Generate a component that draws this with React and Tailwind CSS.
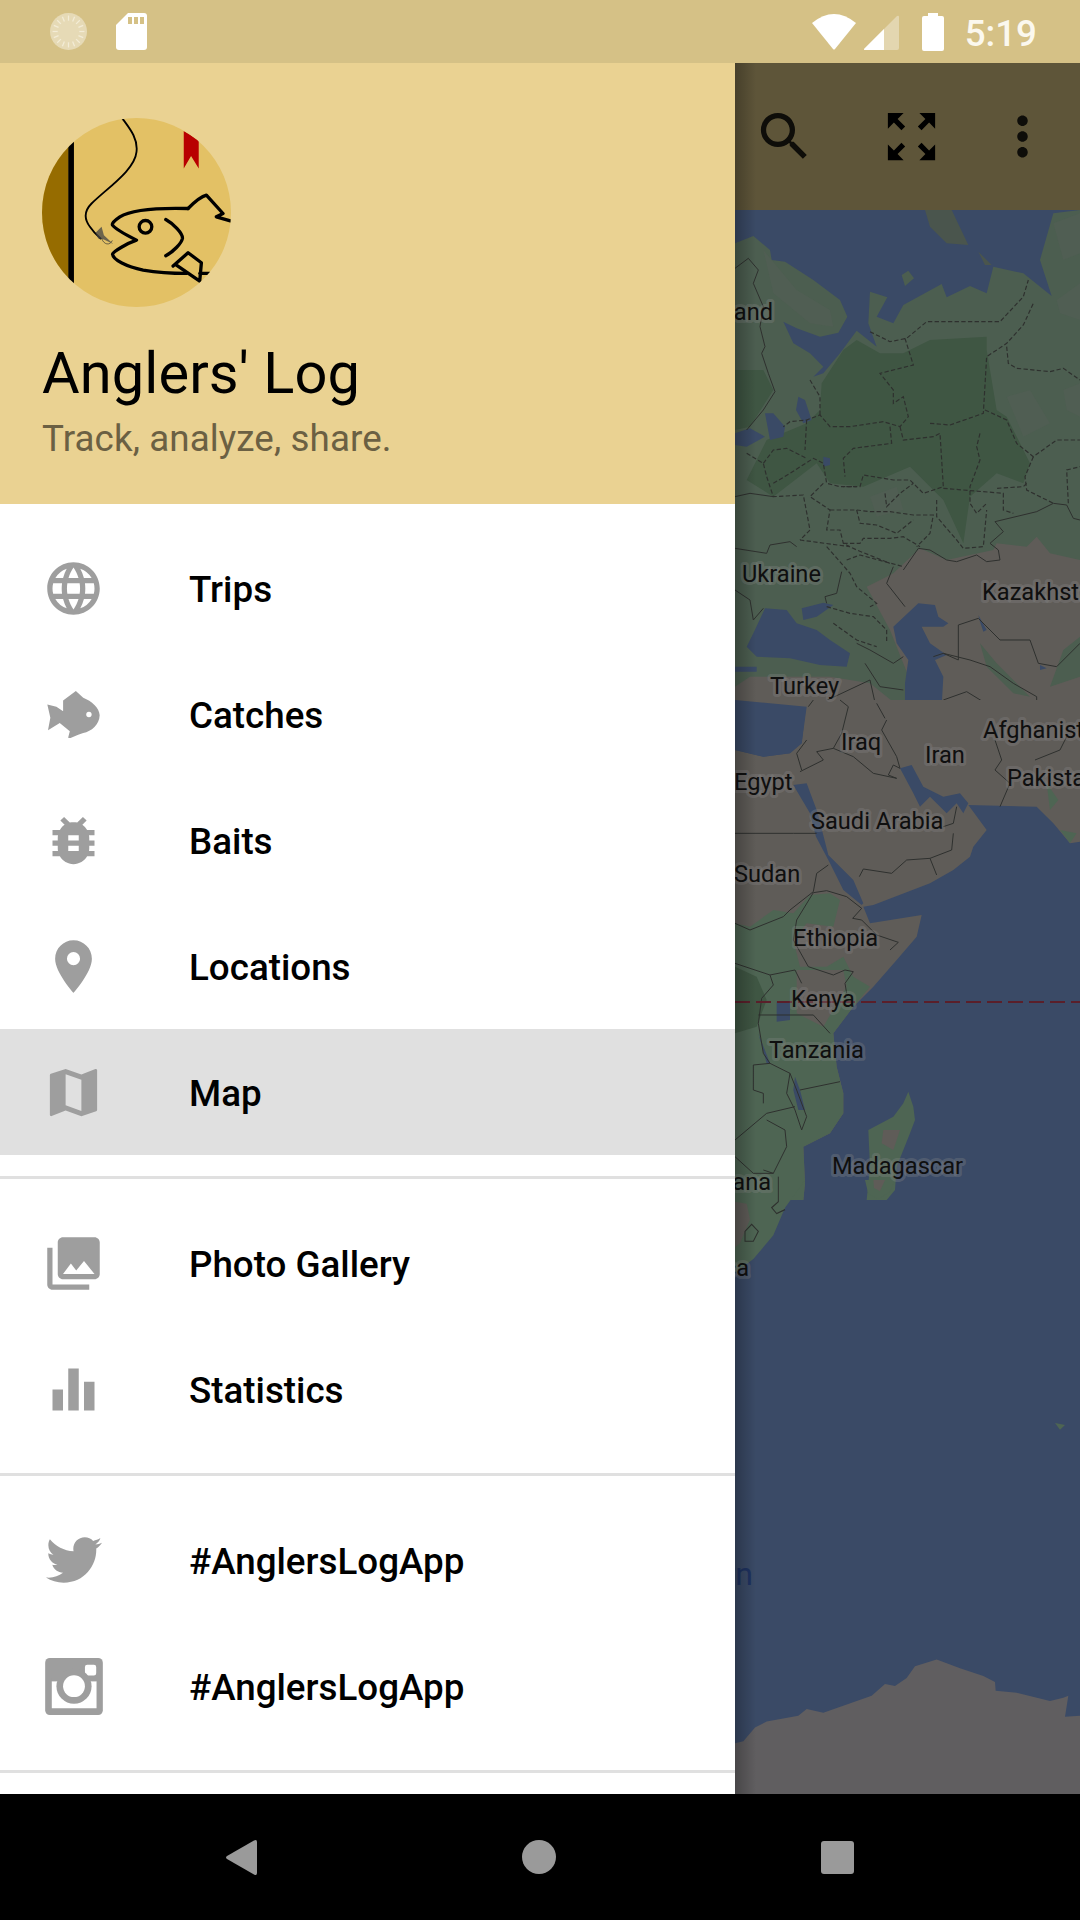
import { MdLanguage, MdBugReport, MdPlace, MdMap, MdPhotoLibrary, MdEqualizer, MdSearch, MdZoomOutMap, MdMoreVert } from "react-icons/md";
import { FaTwitter } from "react-icons/fa";

const FishIcon = () => (
  <svg viewBox="82 450 158 140" className="w-[53px] h-[47px]">
    <path fill="#9e9e9e" d="M83,490 L110,497 L130,510 L130,478 L168,450 L190,470 C215,480 238,500 239,522 C238,550 215,570 190,575 L175,580 L150,591 L145,589 L150,570 L120,545 L85,567 L92,530 Z" />
    <circle cx="207" cy="520" r="8" fill="#fff" />
  </svg>
);

const InstagramIcon = () => (
  <svg viewBox="73 470 174 172" className="w-[58px] h-[57px]">
    <rect x="73" y="470" width="174" height="172" rx="14" fill="#9e9e9e" />
    <path fill="#fff" d="M93,540 H228 V622 H93 Z M193,497 Q193,490 200,490 H220 Q227,490 227,497 V516 Q227,523 220,523 H200 Q193,523 193,516 Z" />
    <circle cx="160" cy="555" r="53" fill="#9e9e9e" />
    <circle cx="160" cy="555" r="33" fill="#fff" />
    <rect x="93" y="530" width="15" height="10" fill="#9e9e9e" />
    <rect x="212" y="530" width="16" height="10" fill="#9e9e9e" />
  </svg>
);

const Logo = () => (
  <svg viewBox="36 23 568 568" className="w-[189px] h-[189px]">
    <defs>
      <clipPath id="logoClip">
        <circle cx="320" cy="307" r="284" />
      </clipPath>
    </defs>
    <g clipPath="url(#logoClip)">
      <rect x="36" y="23" width="568" height="568" fill="#e3c165" />
      <rect x="36" y="23" width="80" height="568" fill="#966c00" />
      <rect x="115" y="23" width="17" height="568" fill="#000" />
      <path fill="#b80000" d="M462,62 L507,90 V175 L484,137 L462,175 Z" />
      <g fill="none" stroke="#000" strokeLinecap="round" strokeLinejoin="round">
        <path strokeWidth="5.5" d="M278,25 C300,55 325,85 320,125 C315,180 230,235 185,280 C160,305 165,330 180,350 C190,365 200,375 212,385" />
        <path strokeWidth="2" stroke="#333" d="M215,385 C222,405 240,407 247,392" />
        <path strokeWidth="10" d="M475,295 C400,293 310,295 270,320 C255,330 245,340 248,345 C255,355 290,375 320,390 C290,400 250,425 248,432 C250,450 290,470 340,480 C400,490 440,490 470,490" />
        <path strokeWidth="10" d="M475,295 C490,280 510,260 530,255 L580,310 L560,320 L602,332" />
        <circle cx="347" cy="350" r="19" strokeWidth="10" />
        <path strokeWidth="10" d="M408,328 C430,340 460,370 458,385 C455,400 430,425 408,437" />
        <path strokeWidth="10" d="M430,468 L475,428 L515,458 L510,513 L440,465 M510,490 L540,490" />
      </g>
      <path fill="#444" opacity="0.75" d="M197,368 L215,350 L222,375 L250,402 L222,388 L205,385 Z" />
    </g>
  </svg>
);

const Spinner = () => {
  const ticks = [];
  for (let i = 0; i < 16; i++) {
    ticks.push(<rect key={i} x="17.4" y="2.5" width="1.2" height="5" fill="#f3ecd6" transform={`rotate(${i * 22.5} 18 18)`} />);
  }
  return (
    <svg viewBox="0 0 36 36" className="w-[37px] h-[37px]">
      <circle cx="18" cy="18" r="18" fill="#e6dab6" />
      {ticks}
      <path d="M33,7 A18,18 0 0 1 7,33 A17,17 0 0 0 33,7 Z" fill="#fff" />
    </svg>
  );
};

const StatusBar = () => (
  <div className="h-[63px] shrink-0 bg-[#d5c186] flex items-center pl-[50px] pr-[43px]">
    <Spinner />
    <svg viewBox="0 0 31 37" className="w-[31px] h-[37px] ml-[29px]">
      <path fill="#fff" d="M12,0 H28 Q31,0 31,3 V34 Q31,37 28,37 H3 Q0,37 0,34 V12 Z" />
      <path fill="#d5c186" d="M12,4 H16 V11 H12 Z M18,4 H22 V11 H18 Z M24,4 H28 V11 H24 Z" />
    </svg>
    <div className="ml-auto flex items-center">
      <svg viewBox="0 0 44 37" className="w-[44px] h-[37px]">
        <path fill="#fff" d="M0,10 Q22,-8 44,10 L23,36 Q22,37 21,36 Z" />
      </svg>
      <svg viewBox="0 0 35 35" className="w-[35px] h-[35px] ml-[8px] mt-[2px]">
        <path fill="#fff" fillOpacity="0.35" d="M0,34 L33,1 Q35,0 35,2 V33 Q35,35 33,35 H2 Q-1,35 0,34 Z" />
        <path fill="#fff" d="M0,34 L20,14 V35 H2 Q-1,35 0,34 Z" />
      </svg>
      <svg viewBox="0 0 22 38" className="w-[22px] h-[38px] ml-[23px]">
        <path fill="#fff" d="M6,0 H16 V3 H20 Q22,3 22,5 V36 Q22,38 20,38 H2 Q0,38 0,36 V5 Q0,3 2,3 H6 Z" />
      </svg>
      <span className="ml-[21px] mt-[5px] text-[36.75px] leading-none font-medium font-['Roboto'] text-[#fbf8ee]">5:19</span>
    </div>
  </div>
);

const Item = ({ icon, label, active }) => (
  <div className={`h-[126px] flex items-center pl-[42px] ${active ? "bg-[#e0e0e0]" : ""}`}>
    <div className="w-[63px] h-[63px] flex items-center justify-center text-[#9e9e9e] shrink-0">{icon}</div>
    <span className="ml-[84px] mt-[4px] text-[36.75px] font-medium text-black">{label}</span>
  </div>
);

const Section = ({ children }) => (
  <div className="py-[21px] border-b-[3px] border-[#e0e0e0]">{children}</div>
);

const Drawer = () => (
  <div className="w-[735px] shrink-0 bg-white overflow-hidden font-['Roboto']">
    <div className="h-[441px] bg-[#ead292] px-[42px] pt-[55px]">
      <Logo />
      <div className="mt-[32px] text-[57.75px] leading-[68px] tracking-[0.1px] text-black">Anglers' Log</div>
      <div className="mt-[10px] text-[36.75px] leading-[44px] tracking-[0.1px] text-[#6b6043]">Track, analyze, share.</div>
    </div>
    <Section>
      <Item icon={<MdLanguage size={63} />} label="Trips" />
      <Item icon={<FishIcon />} label="Catches" />
      <Item icon={<MdBugReport size={63} />} label="Baits" />
      <Item icon={<MdPlace size={63} />} label="Locations" />
      <Item icon={<MdMap size={63} />} label="Map" active />
    </Section>
    <Section>
      <Item icon={<MdPhotoLibrary size={63} />} label="Photo Gallery" />
      <Item icon={<MdEqualizer size={63} />} label="Statistics" />
    </Section>
    <Section>
      <Item icon={<FaTwitter size={56} />} label="#AnglersLogApp" />
      <Item icon={<InstagramIcon />} label="#AnglersLogApp" />
    </Section>
  </div>
);

const solidNorth = [
  "M55,145 L15,175",
  "M55,145 L85,180 L70,220 L100,290 L90,350 L105,410 L95,430 L115,490 L135,545 L100,600 L50,660",
  "M15,860 L60,850 L130,860",
  "M15,1015 L110,1030 L120,1005 L180,995 L200,1010",
  "M335,1085 L320,1150 L285,1160 L290,1180",
  "M520,1080 L565,1015 L600,1020 L650,1050 L680,1055 L740,1035 L770,1055 L810,1050 L805,1020 L780,1000 L820,965 L795,935 L920,905 L970,880 L1010,885 L1030,925 L1050,930",
  "M490,1070 L470,1120 L525,1190",
  "M685,1245 L745,1225 L810,1290 L900,1290 L925,1360 L980,1370 L1050,1300",
  "M685,1245 L685,1350 L640,1330 L610,1340",
  "M640,1330 L720,1350 L780,1370 L850,1420 L920,1460 L920,1480",
  "M380,1300 L420,1320 L490,1360 L520,1340",
  "M405,1360 L450,1430 L520,1440",
  "M250,1490 L420,1410 L440,1500",
  "M640,1470 L710,1445 L800,1500",
  "M15,1140 L60,1170 L70,1230 L100,1195",
];

const dashedNorth = [
  "M420,365 L480,395 L530,385 L590,335 L810,335 L880,260 L895,210",
  "M525,385 L550,465 L450,490 L490,540 L490,580 L520,560 L535,620 L510,650 L460,635 L360,650 L300,650 L270,615 L230,630 L180,635 L160,650",
  "M240,510 L270,560 L270,615",
  "M230,630 L225,720",
  "M480,650 L485,700 L370,715 L340,745 L345,800",
  "M510,650 L520,690 L610,680 L630,670 L640,830 L580,850 L540,810 L490,810 L400,795 L390,830 L340,830",
  "M600,640 L660,645 L760,610 L770,440 L830,400 L880,345 L910,280",
  "M765,600 L830,630 L860,700 L910,740 L980,690 L1050,690",
  "M750,670 L740,710 L750,750 L720,830 L720,880 L740,910 L770,880",
  "M640,835 L820,850 L820,900 L850,910",
  "M890,820 L880,830 L800,835",
  "M910,740 L885,800 L890,840 L970,880",
  "M1015,880 L1010,780 L1050,770",
  "M830,410 L835,460 L860,475 L960,485 L1000,475 L1050,510",
  "M50,730 L100,760 L110,800 L130,860 L220,855 L240,960 L210,990",
  "M130,820 L180,790 L250,745 L280,760 L290,820 L330,830 L380,830",
  "M100,760 L130,720 L170,715 L230,745",
  "M280,820 L240,860 L270,880 L300,900 L290,960 L330,960 L340,1000 L380,1020 L480,1060",
  "M300,900 L380,900 L420,905 L480,905 L550,915 L610,915 L600,970 L560,1010",
  "M380,900 L390,940 L440,945 L500,970 L550,930",
  "M340,1000 L390,1000 L400,985 L480,985 L520,980 L570,1010",
  "M290,1010 L360,1090 L380,1130 L440,1180 L420,1190",
  "M620,870 L620,920 L680,990 L700,1015 L760,1010 L770,900",
  "M465,850 L470,890 L510,850 L550,820",
  "M210,990 L360,1010",
  "M350,1050 L390,1035 L520,1070",
  "M290,1190 L360,1210 L430,1220 L470,1260 L470,1300",
  "M310,1240 L380,1290 L440,1310",
];

const solidSouth = [
  "M235,20 L250,0",
  "M215,210 L200,160 L230,120",
  "M210,215 L280,180 L260,155 L310,145 L335,100 L355,20 L330,0",
  "M310,145 L370,170 L430,220 L500,235 L475,225 L490,195 L510,205",
  "M465,55 L440,10",
  "M455,90 L470,60",
  "M455,90 L500,170 L510,205",
  "M15,400 L190,400 L260,400",
  "M795,120 L815,180 L795,210 L840,250 L810,320",
  "M915,180 L990,150 L1010,110",
  "M640,380 L670,370 L680,320",
  "M670,400 L665,450 L600,475 L530,480 L485,520 L400,507 L388,530",
  "M600,475 L620,525",
  "M295,495 L260,520 L250,575 L180,630 L160,650 L60,690 L15,670",
  "M250,578 L290,572 L350,590 L395,625 L368,655 L395,660 L440,705 L505,727 L480,750",
  "M250,578 L200,660 L190,720 L235,800 L310,825 L345,810 L370,815 L345,850 L350,880",
  "M15,790 L120,825 L195,810 L215,850",
  "M120,825 L130,855 L95,895 L85,970 L100,1060 L120,1090 L70,1095 L70,1170 L100,1180 L100,1210",
  "M85,945 L250,945 L300,1000",
  "M120,1090 L180,1120 L200,1170 L230,1250 L215,1290 L195,1230 L170,1180 L180,1120",
  "M210,1170 L330,1145",
  "M15,1320 L110,1240 L195,1220",
  "M110,1260 L165,1290 L170,1340 L130,1420 L100,1410",
  "M145,1430 L145,1500",
  "M15,1370 L70,1420 L130,1420",
];

const labels = [
  { text: "Finland", x: 773, y: 320, end: true },
  { text: "Ukraine", x: 742, y: 582 },
  { text: "Kazakhstan", x: 982, y: 600 },
  { text: "Turkey", x: 770, y: 694 },
  { text: "Afghanistan", x: 983, y: 738 },
  { text: "Iraq", x: 841, y: 750 },
  { text: "Iran", x: 925, y: 763 },
  { text: "Pakistan", x: 1007, y: 786 },
  { text: "Egypt", x: 734, y: 790 },
  { text: "Saudi Arabia", x: 811, y: 829 },
  { text: "Sudan", x: 734, y: 882 },
  { text: "Ethiopia", x: 793, y: 946 },
  { text: "Kenya", x: 791, y: 1007 },
  { text: "Tanzania", x: 769, y: 1058 },
  { text: "Madagascar", x: 832, y: 1174 },
  { text: "Botswana", x: 771, y: 1190, end: true },
  { text: "South Africa", x: 749, y: 1276, end: true },
];

const WorldMap = () => (
  <svg viewBox="735 210 345 1584" className="w-[345px] h-[1584px] block bg-[#3a4a66]">
    {/* north frame */}
    <g transform="translate(730 210) scale(0.33333)">
      <path fill="#4c5e50" d="M15,100 L70,78 L120,120 L125,150 L165,155 L250,210 L330,270 L352,320 L325,368 L270,380 L200,355 L160,335 L190,400 L240,430 L280,470 L250,500 L280,490 L330,430 L380,362 L440,410 L415,340 L420,245 L472,262 L440,320 L490,340 L520,285 L635,222 L650,262 L720,228 L770,250 L790,170 L880,190 L965,258 L930,150 L970,10 L1050,0 L1050,1500 L15,1500 Z" />
      <path fill="#4a554d" d="M585,0 L665,0 L715,105 L650,100 L600,50 Z M745,125 L785,165 L765,165 Z" />
      <path fill="#4c5e50" d="M515,195 L535,182 L552,205 L525,228 Z" />
      <path fill="#3f5643" d="M275,520 L340,420 L380,390 L450,430 L520,430 L600,390 L770,380 L770,420 L800,600 L830,620 L900,760 L880,820 L800,790 L720,860 L700,1000 L640,870 L540,770 L400,830 L300,820 L260,760 L130,860 L50,810 L110,690 L230,640 L270,600 Z M15,480 L100,480 L130,540 L60,650 L15,660 Z" />
      <path fill="#505e53" d="M980,270 L1050,220 L1050,330 L990,310 Z M970,40 L1050,10 L1050,130 L1000,150 Z M830,560 L900,540 L960,640 L880,680 Z M1000,540 L1050,520 L1050,620 L1010,600 Z M420,860 L500,830 L520,900 L440,920 Z M100,120 L200,240 L300,300 L310,350 L240,340 L130,250 Z" />
      <path fill="#5f5c58" d="M490,1090 L570,1015 L650,1050 L790,1020 L800,1000 L890,1010 L920,980 L960,1030 L1050,1050 L1050,1500 L640,1500 L560,1460 L480,1260 L410,1130 L470,1100 Z" />
      <path fill="#4c5e50" d="M750,1300 L800,1360 L900,1460 L850,1450 L770,1370 Z M1000,1320 L1050,1280 L1050,1400 L960,1430 Z" />
      <path fill="#5f5c58" d="M60,1400 L300,1400 L420,1420 L520,1500 L15,1500 L15,1430 Z" />
      <path fill="#3a4a66" d="M105,1195 L170,1200 L200,1240 L260,1260 L300,1290 L360,1330 L350,1370 L270,1365 L180,1345 L80,1340 L50,1310 L70,1270 Z M215,1195 L280,1178 L310,1185 L260,1220 L220,1230 Z" />
      <path fill="#3a4a66" d="M490,1250 L565,1180 L615,1185 L625,1220 L655,1240 L640,1250 L575,1250 L600,1300 L650,1335 L615,1350 L640,1400 L635,1490 L525,1490 L525,1420 L535,1350 L500,1300 Z" />
      <path fill="#3a4a66" d="M15,670 L60,655 L105,680 L50,710 L15,705 Z M105,610 L130,610 L165,650 L160,680 L120,690 Z M205,560 L225,570 L245,630 L220,640 L198,600 Z M280,740 L300,745 L300,765 L280,770 Z M15,1370 L80,1370 L80,1385 L15,1385 Z M745,1215 L770,1260 L760,1265 L750,1235 Z M930,1365 L950,1375 L930,1380 Z" />
      <g fill="none" stroke="#2e302e" strokeWidth="3">
        {solidNorth.map((d) => <path key={d} d={d} />)}
      </g>
      <g fill="none" stroke="#2e302e" strokeWidth="3.5" strokeDasharray="13 7">
        {dashedNorth.map((d) => <path key={d} d={d} />)}
      </g>
    </g>
    {/* south frame */}
    <g transform="translate(730 700) scale(0.33333)">
      <path fill="#5f5c58" d="M15,150 L100,170 L180,160 L215,130 L230,0 L1050,0 L1050,425 L1020,430 L970,370 L920,320 L715,315 L770,390 L730,440 L720,470 L670,510 L600,550 L430,615 L400,620 L420,670 L575,645 L560,710 L500,780 L430,860 L370,920 L310,1000 L320,1100 L340,1180 L340,1240 L300,1300 L220,1340 L225,1450 L220,1500 L15,1500 Z" />
      <path fill="#3a4a66" d="M15,0 L230,20 L215,130 L180,160 L100,170 L15,150 Z" />
      <path fill="#3a4a66" d="M510,205 L545,195 L580,260 L640,290 L690,280 L715,310 L700,340 L680,310 L650,340 L600,290 L570,320 L550,280 Z" />
      <path fill="#3a4a66" d="M190,255 L230,250 L262,335 L295,465 L370,540 L400,610 L395,615 L340,570 L300,490 L258,410 L240,340 Z" />
      <path fill="#4e6553" d="M15,670 L60,680 L130,630 L190,640 L240,585 L300,580 L330,600 L310,680 L230,670 L190,720 L210,800 L290,800 L340,770 L370,830 L420,860 L370,920 L310,1000 L320,1100 L340,1180 L340,1240 L300,1300 L220,1340 L225,1450 L220,1500 L15,1500 Z" />
      <path fill="#5f5c58" d="M200,810 L340,810 L350,860 L280,980 L200,940 Z" />
      <path fill="#3f5643" d="M15,800 L80,830 L110,900 L80,980 L15,1000 Z" />
      <path fill="#4e6553" d="M950,250 L985,300 L960,330 Z M990,390 L1040,400 L1020,430 Z" />
      <path fill="#4e6553" d="M535,1175 L550,1220 L555,1260 L540,1300 L500,1400 L495,1470 L470,1500 L410,1500 L420,1400 L415,1290 L490,1250 L520,1210 Z" />
      <path fill="#5f5c58" d="M460,1290 L510,1290 L490,1350 L455,1330 Z" />
      <path fill="#3a4a66" d="M140,905 L180,905 L180,960 L140,965 Z M195,1130 L210,1170 L225,1230 L205,1230 L190,1170 Z M85,1000 L120,1090 L110,1090 Z" />
      <g fill="none" stroke="#2e302e" strokeWidth="3">
        {solidSouth.map((d) => <path key={d} d={d} />)}
      </g>
    </g>
    {/* bottom frame, this crop came back 2.53x tall instead of 3x */}
    <g transform="translate(730 1180) scale(0.33333 0.3953)">
      <path fill="#4e6553" d="M15,0 L225,0 L165,70 L130,140 L70,200 L15,235 Z M405,0 L495,0 L480,30 L445,48 L415,35 Z M975,615 L1005,620 L990,632 Z" />
      <path fill="#5f5c58" d="M15,55 L50,60 L60,100 L30,160 L15,170 Z M430,0 L465,0 L450,28 L432,20 Z" />
      <path fill="none" stroke="#2e302e" strokeWidth="3" d="M145,0 L145,55 L125,70 L140,85 L165,75 M45,130 L65,112 L85,130 L70,155 L45,155 Z" />
      <path fill="#605e60" d="M15,1425 L40,1420 L75,1385 L110,1370 L205,1355 L230,1338 L280,1348 L425,1305 L465,1275 L495,1280 L530,1260 L555,1230 L620,1213 L690,1235 L760,1255 L795,1270 L797,1292 L860,1297 L960,1318 L1000,1310 L1015,1305 L1005,1358 L1050,1355 L1050,1570 L15,1570 Z" />
    </g>
    <path d="M735,1002 H1080" fill="none" stroke="#5a1f2a" strokeWidth="2" strokeDasharray="15 6" />
    <g className="font-['Roboto'] text-[23.6px] [paint-order:stroke]" fill="#0f0f0f" stroke="#8a8a8a" strokeOpacity="0.3" strokeWidth="6" strokeLinejoin="round">
      {labels.map((l) => (
        <text key={l.text} x={l.x} y={l.y} textAnchor={l.end ? "end" : "start"}>{l.text}</text>
      ))}
    </g>
    <text x="753" y="1585" textAnchor="end" fill="#1e3260" className="font-['Roboto'] text-[32px]">Southern</text>
  </svg>
);

const MapPane = () => (
  <div className="relative flex-1 flex flex-col overflow-hidden">
    <div className="h-[147px] shrink-0 bg-[#5e5539] flex items-center pl-[18px]">
      <MdSearch size={63} className="text-[#0e0d09]" />
      <MdZoomOutMap size={63} className="ml-[64px] text-black" />
      <MdMoreVert size={63} className="ml-[48px] text-[#0e0d09]" />
    </div>
    <WorldMap />
    <div className="absolute inset-y-0 left-0 w-[21px] bg-gradient-to-r from-[#00000040] to-transparent" />
  </div>
);

const NavBar = () => (
  <div className="relative h-[126px] shrink-0 bg-black flex items-center pl-[226px]">
    <svg viewBox="0 0 31 35" className="w-[31px] h-[35px]">
      <path fill="#9a9a9a" d="M1,19 Q-1,17.5 1,16 L28,0.5 Q31,-1 31,2 V33 Q31,36 28,34.5 Z" />
    </svg>
    <div className="ml-[265px] w-[34px] h-[34px] rounded-full bg-[#9a9a9a]" />
    <div className="ml-[265px] w-[33px] h-[33px] rounded-[3px] bg-[#9a9a9a]" />
  </div>
);

export default function App() {
  return (
    <div className="w-[1080px] h-[1920px] flex flex-col overflow-hidden">
      <StatusBar />
      <div className="flex h-[1731px] overflow-hidden">
        <Drawer />
        <MapPane />
      </div>
      <NavBar />
    </div>
  );
}
